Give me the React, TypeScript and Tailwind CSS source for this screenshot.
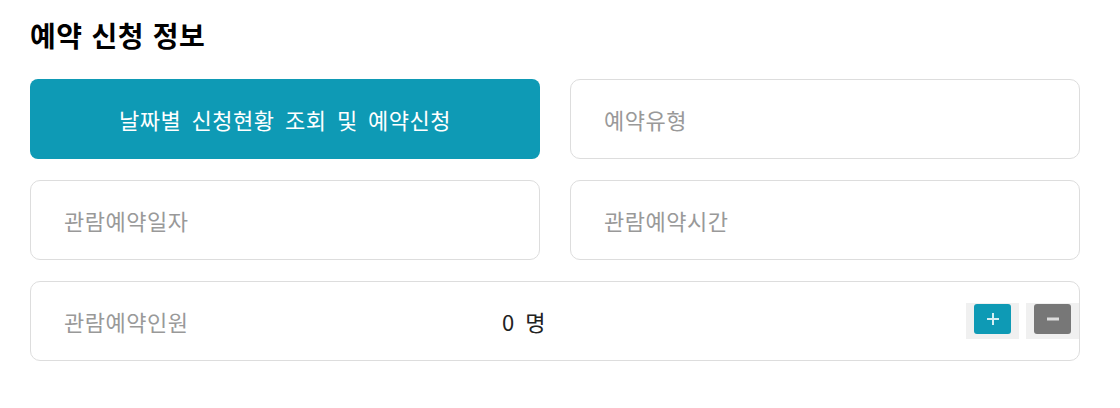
const FONT = "font-['Noto_Sans_CJK_KR','Noto_Sans_KR',sans-serif]";

function Field({ label }: { label: string }) {
  return (
    <div className="flex h-[80px] items-center rounded-[10px] border border-[#dddddd] bg-white pl-[33px]">
      <span className="text-[22px] tracking-[0.5px] text-[#999999]">{label}</span>
    </div>
  );
}

export default function App() {
  return (
    <div className={`min-h-[408px] bg-white px-[30px] pt-[16px] ${FONT}`}>
      <h2 className="text-[28px] font-bold leading-[38px] tracking-[0.5px] text-black [word-spacing:2px]">
        예약 신청 정보
      </h2>

      <div className="mt-[25px] grid w-[1050px] grid-cols-2 gap-x-[30px] gap-y-[21px]">
        <button
          type="button"
          className="flex h-[80px] items-center justify-center rounded-[8px] bg-[#0e9ab5] text-[22px] tracking-[0.5px] text-white [word-spacing:5px]"
        >
          날짜별 신청현황 조회 및 예약신청
        </button>
        <Field label="예약유형" />
        <Field label="관람예약일자" />
        <Field label="관람예약시간" />

        <div className="col-span-2 flex h-[80px] items-center overflow-hidden rounded-[10px] border border-[#dddddd] bg-white pl-[33px]">
          <span className="w-[438px] text-[22px] tracking-[0.5px] text-[#999999]">관람예약인원</span>
          <span className="text-[22px] text-[#222222] [word-spacing:6px]">0 명</span>
          <div className="ml-auto flex gap-[7px]">
            <div className="bg-[#f0f0f0] px-[8px] pt-[1px] pb-[5px]">
              <button
                type="button"
                className="flex h-[30px] w-[37px] items-center justify-center rounded-[3px] bg-[#0e9ab5]"
                aria-label="plus"
              >
                <svg width="12" height="12" viewBox="0 0 12 12">
                  <path d="M6 0v12M0 6h12" stroke="#d6eef3" strokeWidth="2" />
                </svg>
              </button>
            </div>
            <div className="bg-[#f0f0f0] px-[8px] pt-[1px] pb-[5px]">
              <button
                type="button"
                className="flex h-[30px] w-[37px] items-center justify-center rounded-[3px] bg-[#777777]"
                aria-label="minus"
              >
                <svg width="12" height="12" viewBox="0 0 12 12">
                  <path d="M0 6h12" stroke="#dddddd" strokeWidth="3" />
                </svg>
              </button>
            </div>
          </div>
        </div>
      </div>
    </div>
  );
}
